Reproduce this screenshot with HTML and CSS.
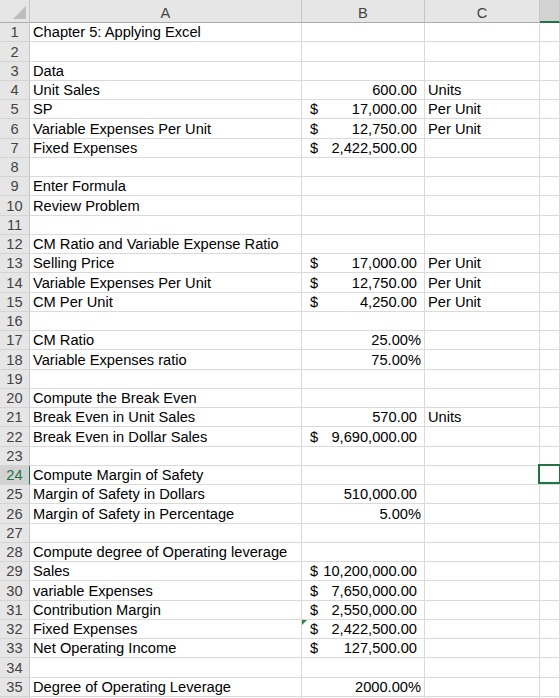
FILE: index.html
```html
<!DOCTYPE html>
<html lang="en">
<head>
    <meta charset="UTF-8">
    <title>Chapter 5: Applying Excel</title>
    <link rel="stylesheet" href="styles.css">
</head>
<body>

<div class="sheet">
    <!-- column headers -->
    <div class="row">
        <div class="c hd corner">
            <svg class="corner-tri" width="30" height="23" viewBox="0 0 30 23"><polygon points="13,19 26,19 26,6" fill="#bdbdbd"/></svg>
        </div>
        <div class="c hd">A</div>
        <div class="c hd">B</div>
        <div class="c hd">C</div>
        <div class="c hd hd-sel"></div>
    </div>

    <div class="row"><div class="c rh">1</div><div class="c">Chapter 5: Applying Excel</div><div class="c"></div><div class="c"></div><div class="c"></div></div>
    <div class="row"><div class="c rh">2</div><div class="c"></div><div class="c"></div><div class="c"></div><div class="c"></div></div>
    <div class="row"><div class="c rh">3</div><div class="c">Data</div><div class="c"></div><div class="c"></div><div class="c"></div></div>
    <div class="row"><div class="c rh">4</div><div class="c">Unit Sales</div><div class="c num">600.00</div><div class="c">Units</div><div class="c"></div></div>
    <div class="row"><div class="c rh">5</div><div class="c">SP</div><div class="c acct"><span>$</span><span>17,000.00</span></div><div class="c">Per Unit</div><div class="c"></div></div>
    <div class="row"><div class="c rh">6</div><div class="c">Variable Expenses Per Unit</div><div class="c acct"><span>$</span><span>12,750.00</span></div><div class="c">Per Unit</div><div class="c"></div></div>
    <div class="row"><div class="c rh">7</div><div class="c">Fixed Expenses</div><div class="c acct"><span>$</span><span>2,422,500.00</span></div><div class="c"></div><div class="c"></div></div>
    <div class="row"><div class="c rh">8</div><div class="c"></div><div class="c"></div><div class="c"></div><div class="c"></div></div>
    <div class="row"><div class="c rh">9</div><div class="c">Enter Formula</div><div class="c"></div><div class="c"></div><div class="c"></div></div>
    <div class="row"><div class="c rh">10</div><div class="c">Review Problem</div><div class="c"></div><div class="c"></div><div class="c"></div></div>
    <div class="row"><div class="c rh">11</div><div class="c"></div><div class="c"></div><div class="c"></div><div class="c"></div></div>
    <div class="row"><div class="c rh">12</div><div class="c">CM Ratio and Variable Expense Ratio</div><div class="c"></div><div class="c"></div><div class="c"></div></div>
    <div class="row"><div class="c rh">13</div><div class="c">Selling Price</div><div class="c acct"><span>$</span><span>17,000.00</span></div><div class="c">Per Unit</div><div class="c"></div></div>
    <div class="row"><div class="c rh">14</div><div class="c">Variable Expenses Per Unit</div><div class="c acct"><span>$</span><span>12,750.00</span></div><div class="c">Per Unit</div><div class="c"></div></div>
    <div class="row"><div class="c rh">15</div><div class="c">CM Per Unit</div><div class="c acct"><span>$</span><span>4,250.00</span></div><div class="c">Per Unit</div><div class="c"></div></div>
    <div class="row"><div class="c rh">16</div><div class="c"></div><div class="c"></div><div class="c"></div><div class="c"></div></div>
    <div class="row"><div class="c rh">17</div><div class="c">CM Ratio</div><div class="c pct">25.00%</div><div class="c"></div><div class="c"></div></div>
    <div class="row"><div class="c rh">18</div><div class="c">Variable Expenses ratio</div><div class="c pct">75.00%</div><div class="c"></div><div class="c"></div></div>
    <div class="row"><div class="c rh">19</div><div class="c"></div><div class="c"></div><div class="c"></div><div class="c"></div></div>
    <div class="row"><div class="c rh">20</div><div class="c">Compute the Break Even</div><div class="c"></div><div class="c"></div><div class="c"></div></div>
    <div class="row"><div class="c rh">21</div><div class="c">Break Even in Unit Sales</div><div class="c num">570.00</div><div class="c">Units</div><div class="c"></div></div>
    <div class="row"><div class="c rh">22</div><div class="c">Break Even in Dollar Sales</div><div class="c acct"><span>$</span><span>9,690,000.00</span></div><div class="c"></div><div class="c"></div></div>
    <div class="row"><div class="c rh">23</div><div class="c"></div><div class="c"></div><div class="c"></div><div class="c"></div></div>
    <div class="row"><div class="c rh rh-sel">24</div><div class="c">Compute Margin of Safety</div><div class="c"></div><div class="c"></div><div class="c cell-sel"></div></div>
    <div class="row"><div class="c rh">25</div><div class="c">Margin of Safety in Dollars</div><div class="c num">510,000.00</div><div class="c"></div><div class="c"></div></div>
    <div class="row"><div class="c rh">26</div><div class="c">Margin of Safety in Percentage</div><div class="c pct">5.00%</div><div class="c"></div><div class="c"></div></div>
    <div class="row"><div class="c rh">27</div><div class="c"></div><div class="c"></div><div class="c"></div><div class="c"></div></div>
    <div class="row"><div class="c rh">28</div><div class="c">Compute degree of Operating leverage</div><div class="c"></div><div class="c"></div><div class="c"></div></div>
    <div class="row"><div class="c rh">29</div><div class="c">Sales</div><div class="c acct"><span>$</span><span>10,200,000.00</span></div><div class="c"></div><div class="c"></div></div>
    <div class="row"><div class="c rh">30</div><div class="c">variable Expenses</div><div class="c acct"><span>$</span><span>7,650,000.00</span></div><div class="c"></div><div class="c"></div></div>
    <div class="row"><div class="c rh">31</div><div class="c">Contribution Margin</div><div class="c acct"><span>$</span><span>2,550,000.00</span></div><div class="c"></div><div class="c"></div></div>
    <div class="row"><div class="c rh">32</div><div class="c">Fixed Expenses</div><div class="c acct flag"><span>$</span><span>2,422,500.00</span></div><div class="c"></div><div class="c"></div></div>
    <div class="row"><div class="c rh">33</div><div class="c">Net Operating Income</div><div class="c acct"><span>$</span><span>127,500.00</span></div><div class="c"></div><div class="c"></div></div>
    <div class="row"><div class="c rh">34</div><div class="c"></div><div class="c"></div><div class="c"></div><div class="c"></div></div>
    <div class="row"><div class="c rh">35</div><div class="c">Degree of Operating Leverage</div><div class="c pct">2000.00%</div><div class="c"></div><div class="c"></div></div>
    <!-- row 36 only peeks in at the bottom edge -->
    <div class="row"><div class="c rh"></div><div class="c"></div><div class="c"></div><div class="c"></div><div class="c"></div></div>
</div>

</body>
</html>
```

FILE: styles.css
```css
body {
    margin: 0;
    background: #fff;
    color: #000;
    font-family: "Liberation Sans", Arial, sans-serif;
    font-size: 14.67px;
    overflow: hidden;
}

.sheet {
    display: grid;
    grid-template-columns: 30px 272px 123px 115px 1fr;
    grid-template-rows: 23px;
    grid-auto-rows: 19.25px;
    height: 698px;
    overflow: hidden;
}

.row {
    display: contents;
}

/* one cell */
.c {
    position: relative;
    box-sizing: border-box;
    display: flex;
    align-items: flex-end;
    min-width: 0;
    padding: 0 3px 0 3px;
    line-height: 17px;
    white-space: nowrap;
    border-right: 1px solid #dadada;
    border-bottom: 1px solid #dadada;
}

/* headers */
.hd {
    justify-content: center;
    padding-bottom: 0.5px;
    background: #e6e6e6;
    color: #444;
    border-right-color: #c6c6c6;
    border-bottom-color: #ababab;
}

.corner {
    padding: 0;
}

.corner-tri {
    position: absolute;
    left: 0;
    top: 0;
}

.hd-sel {
    background: #d2d2d2;
    border-bottom: 2px solid #217346;
}

.rh {
    justify-content: center;
    padding: 0;
    background: #e6e6e6;
    color: #444;
    border-right-color: #c6c6c6;
    border-bottom-color: #d4d4d4;
}

.rh-sel {
    background: #d2d2d2;
    color: #217346;
    border-right-color: #217346;
}

/* number formats */
.acct {
    justify-content: space-between;
    padding-left: 8px;
    padding-right: 7px;
}

.num {
    justify-content: flex-end;
    padding-right: 7px;
}

.pct {
    justify-content: flex-end;
    padding-right: 3px;
}

/* green error flag in the corner */
.flag::before {
    content: "";
    position: absolute;
    left: 0;
    top: 0;
    border-top: 5px solid #1e8c3a;
    border-right: 5px solid transparent;
}

/* active cell */
.cell-sel::after {
    content: "";
    position: absolute;
    left: -2px;
    right: -2px;
    top: -2px;
    bottom: 0;
    border: 2px solid #217346;
}
```
